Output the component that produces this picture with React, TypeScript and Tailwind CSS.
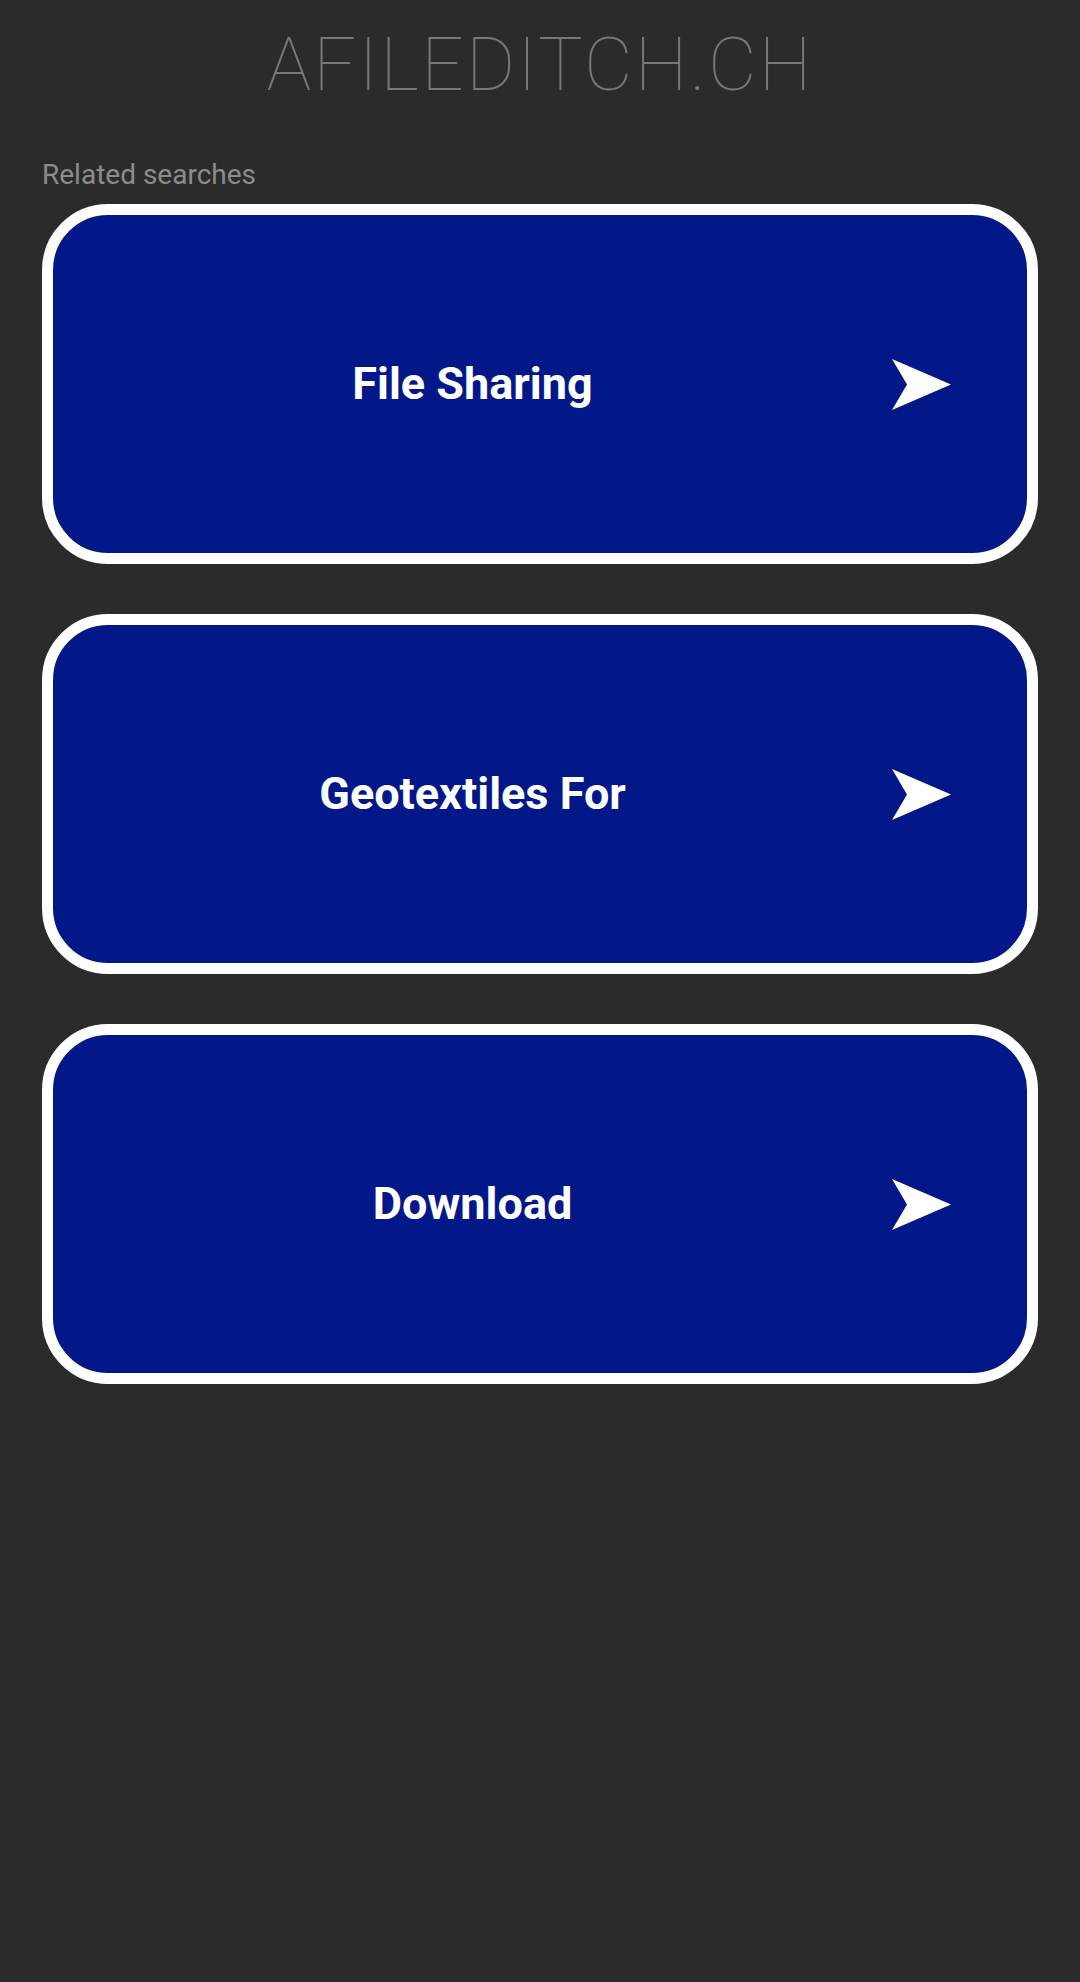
const searches = ["File Sharing", "Geotextiles For", "Download"];

function ArrowIcon() {
  return (
    <svg width="59" height="51" viewBox="0 0 59 51" className="shrink-0">
      <polygon points="0,0 59,25.5 0,51 15,25.5" fill="#ffffff" />
    </svg>
  );
}

export default function App() {
  return (
    <div
      className="min-h-[1982px] bg-[#2b2b2b] px-[42px]"
      style={{ fontFamily: "Roboto, 'Liberation Sans', sans-serif" }}
    >
      <header className="pt-[27px] text-center">
        <h1 className="text-[75px] font-thin leading-[75px] tracking-[2.2px] text-[#777777]">
          AFILEDITCH.CH
        </h1>
      </header>

      <p className="mt-[57px] text-[28px] leading-[32px] text-[#8c8c8c]">Related searches</p>

      <div className="mt-[13px] flex flex-col gap-[50px]">
        {searches.map((s) => (
          <a
            key={s}
            href="#"
            className="flex h-[360px] items-center rounded-[66px] border-[11px] border-white bg-[#021889] pr-[76px]"
          >
            <span className="flex-1 text-center text-[45px] font-bold text-white">{s}</span>
            <ArrowIcon />
          </a>
        ))}
      </div>
    </div>
  );
}
